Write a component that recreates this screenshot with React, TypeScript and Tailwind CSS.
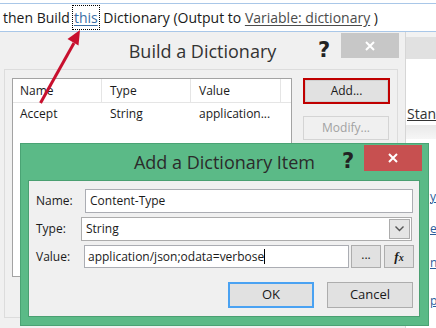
import React from "react";

function Btn({ children, className = "" }: { children: React.ReactNode; className?: string }) {
  return (
    <div className={"flex items-center justify-center bg-[#e1e1e1] border border-[#adadad] text-[12px] text-[#1a1a1a] " + className}>
      {children}
    </div>
  );
}

export default function App() {
  return (
    <div className="relative w-[436px] h-[328px] overflow-hidden bg-white font-['Open_Sans',sans-serif]">
      {/* top expression bar */}
      <div className="mt-[3px] h-[29px] border-y border-[#a9c7e8] flex items-center pl-[3px] text-[14px] text-[#1a1a1a] whitespace-nowrap">
        <span>then Build</span>
        <span className="ml-[2px] h-[25px] border border-dotted border-black flex items-center px-[1px]">
          <span className="text-[#3a6ea5] underline underline-offset-2">this</span>
        </span>
        <span>&nbsp;Dictionary (Output to&nbsp;</span>
        <span className="text-[#4b4b4b] underline underline-offset-2">Variable: dictionary</span>
        <span>&nbsp;)</span>
      </div>

      {/* background page to the right */}
      <div className="pl-[406px] flex flex-col">
        <div className="h-[5px] bg-[#f2f2f2]" />
        <div className="h-[22px] bg-[#e1e1e1]" />
        <div className="h-[66px] bg-white flex items-end pl-[1px] pb-[4px]">
          <span className="text-[14px] text-[#333] underline leading-none">Stan</span>
        </div>
        <div className="h-[14px] bg-gradient-to-b from-[#e9e9e9] to-[#f6f6f6]" />
        <div className="flex flex-col pl-[24px] text-[12px] text-[#2b5d9a] underline leading-none">
          <span className="mt-[52px]">y</span>
          <span className="mt-[20px]">e</span>
          <span className="mt-[22px]">n</span>
          <span className="mt-[26px]">p</span>
        </div>
      </div>

      {/* Build a Dictionary window */}
      <div className="absolute left-0 top-[32px] w-[406px] h-[300px] bg-[#f0f0f0] border-r border-[#d6d6d6]">
        <div className="relative h-[37px] flex items-center justify-center">
          <span className="text-[18px] text-[#333] mt-[2px]">Build a Dictionary</span>
          <span className="absolute left-[318px] top-[3px] text-[21px] font-bold text-[#222] font-['DejaVu_Sans',sans-serif]">?</span>
          <div className="absolute left-[341px] top-[1px] w-[58px] h-[25px] bg-[#c7c7c7] flex items-center justify-center">
            <svg width="10" height="10" viewBox="0 0 10 10">
              <path d="M1 1 L9 9 M9 1 L1 9" stroke="white" strokeWidth="2" />
            </svg>
          </div>
        </div>
        <div className="ml-[4px] w-[394px] h-[249px] border border-[#dcdcdc] flex pt-[8px] pl-[7px]">
          {/* list */}
          <div className="w-[280px] h-[199px] bg-white border border-[#a3a3a3] flex flex-col text-[12px] text-[#1a1a1a]">
            <div className="h-[24px] flex border-b border-[#e5e5e5]">
              <div className="w-[89px] border-r border-[#e5e5e5] pl-[7px] flex items-center">Name</div>
              <div className="w-[89px] border-r border-[#e5e5e5] pl-[8px] flex items-center">Type</div>
              <div className="w-[90px] border-r border-[#e5e5e5] pl-[8px] flex items-center">Value</div>
            </div>
            <div className="h-[22px] flex items-center">
              <div className="w-[89px] pl-[7px]">Accept</div>
              <div className="w-[89px] pl-[8px]">String</div>
              <div className="w-[90px] pl-[8px]">application...</div>
            </div>
          </div>
          {/* buttons */}
          <div className="ml-[11px] flex flex-col">
            <div className="w-[87px] h-[26px] border-2 border-[#c00000] flex">
              <Btn className="flex-1 border-[#cfcfcf]">Add...</Btn>
            </div>
            <div className="mt-[12px] w-[86px] h-[24px] bg-[#f0f0f0] border border-[#d4d4d4] flex items-center justify-center text-[12px] text-[#a2a2a2]">
              Modify...
            </div>
          </div>
        </div>
      </div>

      {/* Add a Dictionary Item window */}
      <div className="absolute left-[20px] top-[143px] w-[409px] h-[183px] bg-[#5bba87] border border-[#4aa374] flex flex-col">
        <div className="relative h-[36px] flex items-center justify-center">
          <span className="text-[18px] text-[#2b2b2b] mt-[1px]">Add a Dictionary Item</span>
          <span className="absolute left-[321px] top-[2px] text-[21px] font-bold text-[#222] font-['DejaVu_Sans',sans-serif]">?</span>
          <div className="absolute left-[343px] top-[1px] w-[58px] h-[26px] bg-[#c75050] flex items-center justify-center">
            <svg width="10" height="10" viewBox="0 0 10 10">
              <path d="M1 1 L9 9 M9 1 L1 9" stroke="white" strokeWidth="2" />
            </svg>
          </div>
        </div>
        <div className="ml-[7px] w-[392px] h-[137px] bg-[#f0f0f0] border border-[#4a9f71] flex flex-col text-[12px] text-[#1a1a1a]">
          <div className="mt-[8px] h-[24px] flex items-center">
            <span className="w-[56px] pl-[7px]">Name:</span>
            <div className="w-[328px] h-[24px] bg-white border border-[#abadb3] flex items-center pl-[4px]">Content-Type</div>
          </div>
          <div className="mt-[4px] h-[24px] flex items-center">
            <span className="w-[52px] pl-[7px]">Type:</span>
            <div className="w-[331px] h-[24px] bg-white border border-[#acacac] flex items-center pl-[4px] pr-[1px]">
              <span className="flex-1">String</span>
              <div className="w-[21px] h-[20px] bg-[#e5e5e5] border border-[#acacac] flex items-center justify-center">
                <svg width="9" height="6" viewBox="0 0 9 6">
                  <path d="M0.5 0.5 L4.5 4.5 L8.5 0.5" stroke="#555" strokeWidth="1.4" fill="none" />
                </svg>
              </div>
            </div>
          </div>
          <div className="mt-[4px] h-[23px] flex items-center">
            <span className="w-[55px] pl-[7px]">Value:</span>
            <div className="w-[265px] h-[23px] bg-white border border-[#abadb3] flex items-center pl-[3px]">
              <span>application/json;odata=verbose</span>
              <span className="w-[1px] h-[15px] bg-black" />
            </div>
            <Btn className="ml-[2px] w-[30px] h-[23px] items-end pb-[3px]">...</Btn>
            <Btn className="ml-[3px] w-[30px] h-[23px]">
              <span className="font-['Liberation_Serif',serif] italic font-bold text-[13px]">f<span className="text-[10px]">x</span></span>
            </Btn>
          </div>
          <div className="mt-[14px] flex">
            <div className="ml-[199px] w-[86px] h-[26px] bg-[#e1e1e1] border-2 border-[#4aa2f2] flex items-center justify-center text-[13px]">OK</div>
            <Btn className="ml-[13px] w-[86px] h-[26px] text-[13px]">Cancel</Btn>
          </div>
        </div>
      </div>

      {/* red arrow */}
      <svg className="absolute left-0 top-0" width="436" height="328" viewBox="0 0 436 328">
        <line x1="40.5" y1="103" x2="74" y2="43" stroke="#c8102e" strokeWidth="3" />
        <polygon points="80,30 67.5,39 78.5,45.5" fill="#c8102e" />
      </svg>
    </div>
  );
}
